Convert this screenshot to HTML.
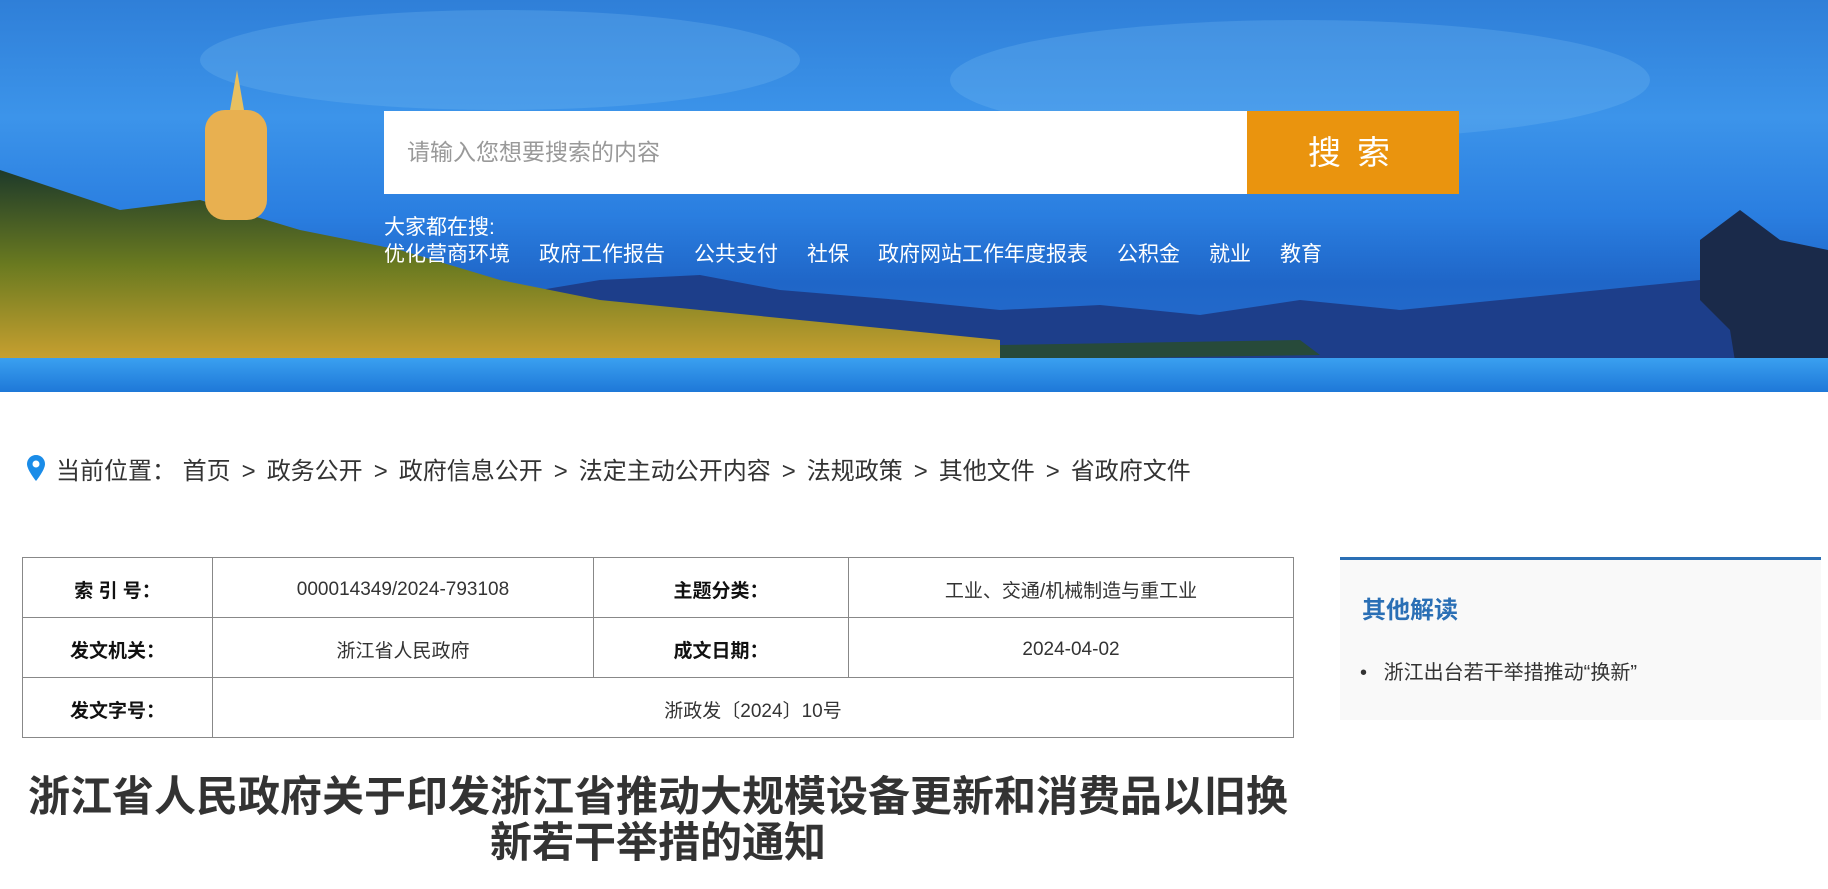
<!DOCTYPE html>
<html><head><meta charset="utf-8"><style>
*{margin:0;padding:0;box-sizing:border-box}
body{width:1828px;height:889px;background:#fff;font-family:"Liberation Sans","Noto Sans CJK SC",sans-serif;position:relative;overflow:hidden;color:#333}
.banner{position:absolute;left:0;top:0;width:1828px;height:392px;background:linear-gradient(180deg,#2f7fd8 0%,#3c94ea 30%,#2a7ee0 55%,#1f66c8 72%,#2a70d0 100%);overflow:hidden}
.abs{position:absolute}
.search{left:384px;top:111px;width:863px;height:83px;background:#fff;font-size:23px;color:#999;line-height:83px;padding-left:23px}
.btn{left:1247px;top:111px;width:212px;height:83px;background:#ea940e;color:#fff;font-size:33px;line-height:83px;text-align:center;letter-spacing:16px;padding-left:8px}
.hot{left:384px;color:#fff;font-size:21px}
.hot span{margin-right:29px}
.bc{top:451px;font-size:24px;color:#333;white-space:nowrap}
.bc b{font-weight:normal;margin:0 11px}
table{position:absolute;left:22px;top:557px;width:1272px;border-collapse:collapse;font-size:19px}
td{border:1px solid #888;height:60px;text-align:center;color:#333;padding-top:4px}
td.h{font-weight:bold;color:#111}
.side{left:1340px;top:557px;width:481px;height:163px;background:#f9f9f9;border-top:3px solid #2a6fb5}
.title{left:22px;top:774px;width:1272px;text-align:center;font-size:42px;font-weight:bold;color:#333;line-height:46px;white-space:nowrap}
</style></head><body>
<div class="banner">
<svg width="1828" height="392" style="position:absolute;left:0;top:0">
<defs><linearGradient id="w" x1="0" y1="0" x2="0" y2="1"><stop offset="0" stop-color="#3aa0f0"/><stop offset="1" stop-color="#1e78d8"/></linearGradient>
<linearGradient id="t" x1="0" y1="0" x2="0" y2="1"><stop offset="0" stop-color="#1e3a2a"/><stop offset="0.5" stop-color="#6a7a20"/><stop offset="1" stop-color="#c8a030"/></linearGradient></defs>
<ellipse cx="500" cy="60" rx="300" ry="50" fill="#6fb6f0" opacity=".3"/>
<ellipse cx="1300" cy="80" rx="350" ry="60" fill="#7cc0f5" opacity=".25"/>
<path d="M480 300 L600 280 L700 275 L780 290 L900 300 L1000 310 L1100 305 L1200 315 L1300 300 L1400 310 L1500 300 L1600 290 L1700 280 L1828 290 L1828 360 L480 360Z" fill="#1d3e8a"/>
<path d="M0 170 L60 190 L120 210 L200 200 L300 230 L400 250 L500 280 L600 300 L700 310 L900 330 L1000 340 L1000 360 L0 360Z" fill="url(#t)"/>
<path d="M1000 345 L1300 340 L1320 355 L1000 360Z" fill="#274a3a"/>
<rect x="205" y="110" width="62" height="110" rx="20" fill="#e8b050"/>
<path d="M237 70 L230 110 L244 110Z" fill="#e8c060"/>
<path d="M1700 240 L1740 210 L1780 240 L1828 250 L1828 392 L1740 392 L1730 330 L1700 300Z" fill="#1a2a4a"/>
<rect x="0" y="358" width="1828" height="34" fill="url(#w)"/>
</svg>
</div>
<div class="abs search">请输入您想要搜索的内容</div>
<div class="abs btn">搜索</div>
<div class="abs hot" style="top:211px">大家都在搜:</div>
<div class="abs hot" style="top:238px"><span>优化营商环境</span><span>政府工作报告</span><span>公共支付</span><span>社保</span><span>政府网站工作年度报表</span><span>公积金</span><span>就业</span><span>教育</span></div>
<svg class="abs" style="left:27px;top:455px" width="18" height="26" viewBox="0 0 18 26"><path d="M9 0C4 0 0 4 0 9c0 6 9 17 9 17s9-11 9-17C18 4 14 0 9 0z" fill="#1a8ce8"/><circle cx="9" cy="9" r="3.5" fill="#fff"/></svg>
<div class="abs bc" style="left:56px">当前位置： 首页<b>&gt;</b>政务公开<b>&gt;</b>政府信息公开<b>&gt;</b>法定主动公开内容<b>&gt;</b>法规政策<b>&gt;</b>其他文件<b>&gt;</b>省政府文件</div>
<table>
<tr><td class="h" style="width:190px">索 引 号：</td><td style="width:381px">000014349/2024-793108</td><td class="h" style="width:255px">主题分类：</td><td>工业、交通/机械制造与重工业</td></tr>
<tr><td class="h">发文机关：</td><td>浙江省人民政府</td><td class="h">成文日期：</td><td>2024-04-02</td></tr>
<tr><td class="h">发文字号：</td><td colspan="3">浙政发〔2024〕10号</td></tr>
</table>
<div class="abs side">
<div class="abs" style="left:22px;top:30px;font-size:24px;font-weight:bold;color:#2a6fb5">其他解读</div>
<div class="abs" style="left:20px;top:96px;font-size:20px;color:#333">•&nbsp;&nbsp; 浙江出台若干举措推动“换新”</div>
</div>
<div class="abs title">浙江省人民政府关于印发浙江省推动大规模设备更新和消费品以旧换<br>新若干举措的通知</div>
</body></html>
